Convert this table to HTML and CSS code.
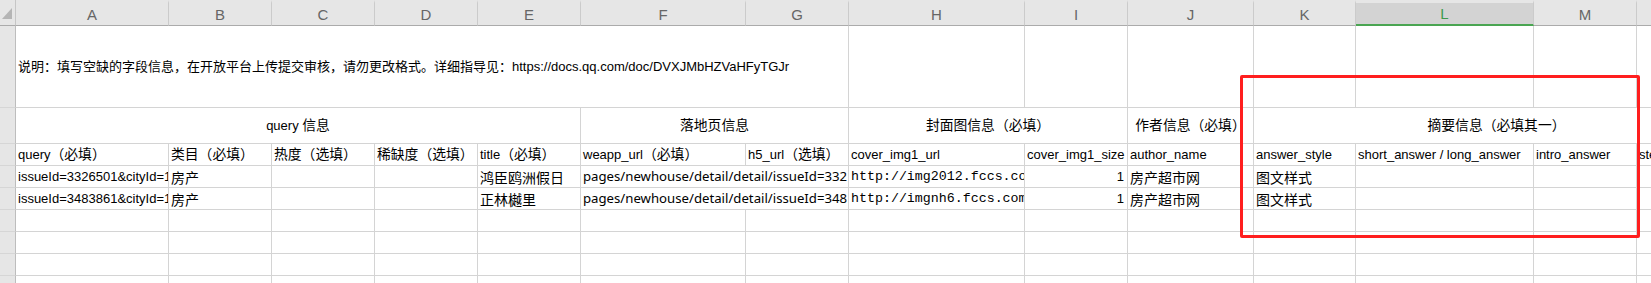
FILE: index.html
```html
<!DOCTYPE html>
<html lang="zh-CN">
<head>
<meta charset="utf-8">
<title>Sheet</title>
<link rel="stylesheet" href="styles.css">
</head>
<body>
<div class="wrap">
  <div class="sheet">
    <!-- column header row -->
    <div class="corner">
      <svg class="corner-tri" width="14" height="20" viewBox="0 0 14 20"><polygon points="2,19 12,19 12,8" fill="#b5b5b5"/></svg>
    </div>
    <div class="colhead">A</div>
    <div class="colhead">B</div>
    <div class="colhead">C</div>
    <div class="colhead">D</div>
    <div class="colhead">E</div>
    <div class="colhead">F</div>
    <div class="colhead">G</div>
    <div class="colhead">H</div>
    <div class="colhead">I</div>
    <div class="colhead">J</div>
    <div class="colhead">K</div>
    <div class="colhead sel">L</div>
    <div class="colhead">M</div>
    <div class="colhead">N</div>

    <!-- row 1 -->
    <div class="rowhead"></div>
    <div class="cell span-7">说明：填写空缺的字段信息，在开放平台上传提交审核，请勿更改格式。详细指导见：https://docs.qq.com/doc/DVXJMbHZVaHFyTGJr</div>
    <div class="cell"></div>
    <div class="cell"></div>
    <div class="cell"></div>
    <div class="cell"></div>
    <div class="cell"></div>
    <div class="cell"></div>
    <div class="cell"></div>

    <!-- row 2 -->
    <div class="rowhead"></div>
    <div class="cell center span-5">query&nbsp;<span class="z">信息</span></div>
    <div class="cell center span-2 z">落地页信息</div>
    <div class="cell center span-2 z">封面图信息（必填）</div>
    <div class="cell center z">作者信息（必填）</div>
    <div class="cell center span-4 z">摘要信息（必填其一）</div>

    <!-- row 3 -->
    <div class="rowhead"></div>
    <div class="cell">query<span class="z">（必填）</span></div>
    <div class="cell z">类目（必填）</div>
    <div class="cell z">热度（选填）</div>
    <div class="cell z">稀缺度（选填）</div>
    <div class="cell">title<span class="z">（必填）</span></div>
    <div class="cell">weapp_url<span class="z">（必填）</span></div>
    <div class="cell">h5_url<span class="z">（选填）</span></div>
    <div class="cell">cover_img1_url</div>
    <div class="cell">cover_img1_size</div>
    <div class="cell">author_name</div>
    <div class="cell">answer_style</div>
    <div class="cell">short_answer / long_answer</div>
    <div class="cell">intro_answer</div>
    <div class="cell">step_answer</div>

    <!-- row 4 -->
    <div class="rowhead"></div>
    <div class="cell">issueId=3326501&amp;cityId=1</div>
    <div class="cell cjk">房产</div>
    <div class="cell"></div>
    <div class="cell"></div>
    <div class="cell cjk">鸿臣鸥洲假日</div>
    <div class="cell yh span-2">pages/newhouse/detail/detail/issueId=332</div>
    <div class="cell mono">http://img2012.fccs.co</div>
    <div class="cell right">1</div>
    <div class="cell cjk">房产超市网</div>
    <div class="cell cjk">图文样式</div>
    <div class="cell"></div>
    <div class="cell"></div>
    <div class="cell"></div>

    <!-- row 5 -->
    <div class="rowhead"></div>
    <div class="cell">issueId=3483861&amp;cityId=1</div>
    <div class="cell cjk">房产</div>
    <div class="cell"></div>
    <div class="cell"></div>
    <div class="cell cjk">正林樾里</div>
    <div class="cell yh span-2">pages/newhouse/detail/detail/issueId=348</div>
    <div class="cell mono">http://imgnh6.fccs.com</div>
    <div class="cell right">1</div>
    <div class="cell cjk">房产超市网</div>
    <div class="cell cjk">图文样式</div>
    <div class="cell"></div>
    <div class="cell"></div>
    <div class="cell"></div>

    <!-- rows 6-9 empty -->
    <div class="rowhead"></div>
    <div class="cell"></div><div class="cell"></div><div class="cell"></div><div class="cell"></div><div class="cell"></div><div class="cell"></div><div class="cell"></div><div class="cell"></div><div class="cell"></div><div class="cell"></div><div class="cell"></div><div class="cell"></div><div class="cell"></div><div class="cell"></div>
    <div class="rowhead"></div>
    <div class="cell"></div><div class="cell"></div><div class="cell"></div><div class="cell"></div><div class="cell"></div><div class="cell"></div><div class="cell"></div><div class="cell"></div><div class="cell"></div><div class="cell"></div><div class="cell"></div><div class="cell"></div><div class="cell"></div><div class="cell"></div>
    <div class="rowhead"></div>
    <div class="cell"></div><div class="cell"></div><div class="cell"></div><div class="cell"></div><div class="cell"></div><div class="cell"></div><div class="cell"></div><div class="cell"></div><div class="cell"></div><div class="cell"></div><div class="cell"></div><div class="cell"></div><div class="cell"></div><div class="cell"></div>
    <div class="rowhead"></div>
    <div class="cell"></div><div class="cell"></div><div class="cell"></div><div class="cell"></div><div class="cell"></div><div class="cell"></div><div class="cell"></div><div class="cell"></div><div class="cell"></div><div class="cell"></div><div class="cell"></div><div class="cell"></div><div class="cell"></div><div class="cell"></div>
  </div>
  <div class="highlight"></div>
</div>
</body>
</html>
```

FILE: styles.css
```css
html, body {
  margin: 0;
  padding: 0;
  background: #ffffff;
  overflow: hidden;
}

.wrap {
  position: relative;
  width: 1651px;
  height: 283px;
  overflow: hidden;
}

.sheet {
  display: grid;
  grid-template-columns: 16px 153px 103px 103px 103px 103px 165px 103px 176px 103px 126px 102px 178px 103px 103px;
  grid-template-rows: 26px 82px 36px 22px 22px 22px 22px 22px 22px 22px;
  width: 1740px;
  font-family: "Liberation Sans", "Noto Sans CJK SC", sans-serif;
  font-size: 13px;
  line-height: 1;
  color: #000000;
}

.corner {
  box-sizing: border-box;
  background: #e6e6e6;
  border-right: 1px solid #c6c6c6;
  border-bottom: 1px solid #ababab;
  position: relative;
}

.corner-tri {
  display: block;
}

.colhead {
  box-sizing: border-box;
  background: #e6e6e6;
  background-clip: padding-box;
  border-top: 3px solid #e6e6e6;
  border-right: 1px solid #cbcbcb;
  border-bottom: 1px solid #ababab;
  display: flex;
  align-items: center;
  justify-content: center;
  font-family: "Liberation Sans", sans-serif;
  font-size: 15px;
  color: #666666;
}

.colhead.sel {
  background-color: #d3d3d3;
  border-bottom: 2px solid #4aa552;
  color: #3d9a4c;
}

.rowhead {
  box-sizing: border-box;
  background: #e6e6e6;
  border-right: 1px solid #bdbdbd;
  border-bottom: 1px solid #d6d6d6;
}

.cell {
  box-sizing: border-box;
  border-right: 1px solid #d4d4d4;
  border-bottom: 1px solid #d4d4d4;
  padding: 0 2px;
  display: flex;
  align-items: center;
  white-space: nowrap;
  overflow: hidden;
  min-width: 0;
}

.center { justify-content: center; }
.right { justify-content: flex-end; padding-right: 3px; }

.span-2 { grid-column: span 2; }
.span-4 { grid-column: span 4; }
.span-5 { grid-column: span 5; }
.span-7 { grid-column: span 7; }

.z {
  font-size: 13.8px;
}

.cjk {
  font-family: "Noto Sans CJK SC", sans-serif;
  font-size: 14px;
}

.yh {
  font-family: "Noto Sans", "Noto Sans CJK SC", sans-serif;
  font-size: 13.2px;
}

.mono {
  font-family: "Liberation Mono", "Noto Sans CJK SC", monospace;
  font-size: 13.3px;
}

.highlight {
  position: absolute;
  left: 1240px;
  top: 75px;
  width: 400px;
  height: 163px;
  box-sizing: border-box;
  border: 3px solid #ff1e1e;
  border-radius: 2px;
  pointer-events: none;
}
```
